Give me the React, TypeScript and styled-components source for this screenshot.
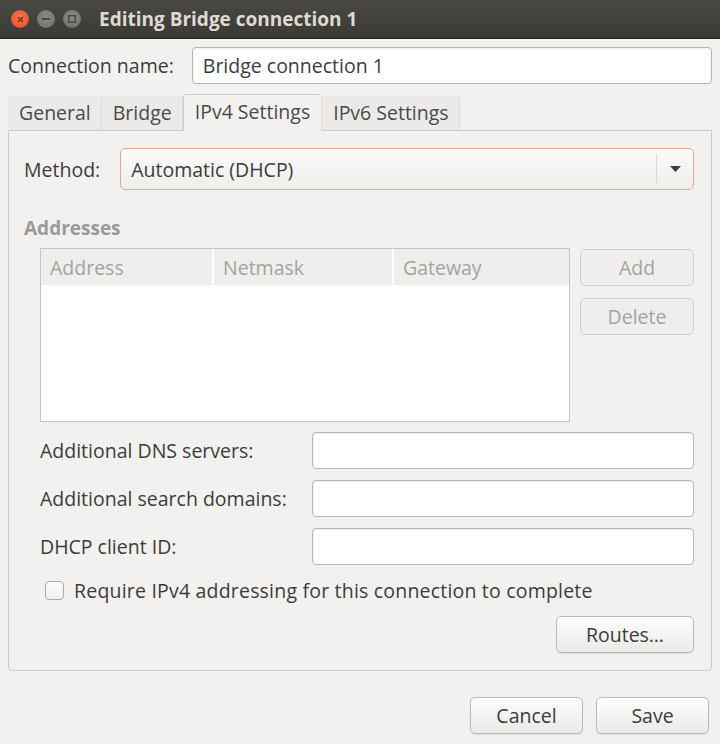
import { Fragment } from "react";
import styled, { createGlobalStyle } from "styled-components";

const GlobalStyle = createGlobalStyle`
    html, body {
        margin: 0;
        padding: 0;
        background: #f2f1f0;
    }
    body {
        font-family: "Open Sans", "Noto Sans", sans-serif;
        color: #3c3c3c;
    }
`;

const Window = styled.div`
    width: 720px;
    height: 744px;
    display: flex;
    flex-direction: column;
    background: #f2f1f0;
    overflow: hidden;
`;

const TitleBar = styled.div`
    height: 38px;
    display: flex;
    align-items: center;
    padding-left: 11px;
    gap: 8px;
    background: linear-gradient(#4a4944, #3a3935);
    border-bottom: 1px solid #2a2926;
`;

const WinButton = styled.div<{ $close?: boolean }>`
    width: 18px;
    height: 18px;
    border-radius: 50%;
    display: flex;
    align-items: center;
    justify-content: center;
    background: ${({ $close }) =>
        $close
            ? "radial-gradient(circle at 50% 40%, #f47a53, #df4a1f)"
            : "radial-gradient(circle at 50% 40%, #8c8b86, #6d6c67)"};
`;

const Title = styled.div`
    margin-left: 10px;
    color: #dfdbd2;
    font-weight: 700;
    font-size: 19px;
`;

const Body = styled.div`
    flex: 1;
    display: flex;
    flex-direction: column;
    padding: 7px 8px 0 8px;
`;

const NameRow = styled.div`
    display: flex;
    align-items: center;
    gap: 18px;
    height: 39px;
`;

const Label = styled.span`
    font-size: 19.5px;
    color: #3c3c3c;
    white-space: nowrap;
`;

const CheckLabel = styled(Label)`
    letter-spacing: 0.2px;
`;

const TextInput = styled.div`
    flex: 1;
    height: 37px;
    box-sizing: border-box;
    border: 1px solid #b9b6b1;
    border-radius: 4px;
    background: #fff;
    box-shadow: inset 0 1px 2px rgba(0, 0, 0, 0.08);
    display: flex;
    align-items: center;
    padding: 0 10px;
    font-size: 19.5px;
    color: #3c3c3c;
`;

const TabBar = styled.div`
    display: flex;
    align-items: flex-end;
    margin-top: 8px;
    height: 37px;
`;

const Tab = styled.div<{ $active?: boolean }>`
    height: ${({ $active }) => ($active ? "37px" : "34px")};
    box-sizing: border-box;
    display: flex;
    align-items: center;
    padding: 0 ${({ $active }) => ($active ? "11px" : "10px")};
    padding-bottom: 3px;
    font-size: 19.5px;
    color: #4a4a4a;
    background: ${({ $active }) => ($active ? "#f2f1f0" : "#ebeae8")};
    border: 1px solid ${({ $active }) => ($active ? "#cfccc7" : "transparent")};
    border-right: 1px solid #dedcd8;
    border-bottom: none;
    border-radius: ${({ $active }) => ($active ? "4px 4px 0 0" : "0")};
    position: relative;
    top: ${({ $active }) => ($active ? "1px" : "0")};
    z-index: ${({ $active }) => ($active ? 1 : 0)};
`;

const Panel = styled.div`
    width: 704px;
    height: 541px;
    box-sizing: border-box;
    border: 1px solid #cfccc7;
    border-radius: 0 0 4px 4px;
    padding: 17px 17px 0 15px;
    display: flex;
    flex-direction: column;
`;

const MethodRow = styled.div`
    display: flex;
    align-items: center;
    gap: 20px;
`;

const Combo = styled.div`
    flex: 1;
    height: 42px;
    box-sizing: border-box;
    border: 1px solid #e9a493;
    border-radius: 5px;
    background: linear-gradient(#fbfbfa, #efeeec);
    display: flex;
    align-items: center;
    font-size: 19.5px;
    color: #3c3c3c;
`;

const ComboText = styled.span`
    flex: 1;
    padding-left: 10px;
`;

const ComboArrow = styled.div`
    width: 36px;
    height: 30px;
    border-left: 1px solid #dad8d4;
    display: flex;
    align-items: center;
    justify-content: center;
`;

const SectionTitle = styled.div`
    margin-top: 25px;
    font-size: 19px;
    font-weight: 700;
    color: #9a9a98;
`;

const AddrRow = styled.div`
    display: flex;
    gap: 10px;
    margin-top: 7px;
    padding-left: 16px;
`;

const Table = styled.div`
    width: 530px;
    height: 174px;
    box-sizing: border-box;
    border: 1px solid #c8c5c0;
    background: #fff;
`;

const TableHead = styled.div`
    display: grid;
    grid-template-columns: 173px 180px 1fr;
    height: 36px;
    background: #efeeec;
`;

const HeadCell = styled.div`
    display: flex;
    align-items: center;
    padding-left: 9px;
    font-size: 19.5px;
    color: #a3a3a1;
    border-right: 2px solid #fff;
    &:last-child {
        border-right: none;
    }
`;

const SideButtons = styled.div`
    display: flex;
    flex-direction: column;
    gap: 12px;
    padding-top: 1px;
`;

const Button = styled.div<{ $w: number; $disabled?: boolean }>`
    width: ${({ $w }) => $w}px;
    height: 37px;
    box-sizing: border-box;
    border: 1px solid ${({ $disabled }) => ($disabled ? "#d3d1cd" : "#bdbab5")};
    border-radius: 5px;
    background: ${({ $disabled }) =>
        $disabled ? "#efeeec" : "linear-gradient(#fdfdfc, #ebeae8)"};
    box-shadow: ${({ $disabled }) =>
        $disabled ? "none" : "0 1px 1px rgba(0, 0, 0, 0.08)"};
    display: flex;
    align-items: center;
    justify-content: center;
    font-size: 19.5px;
    color: ${({ $disabled }) => ($disabled ? "#a3a3a1" : "#3c3c3c")};
`;

const FieldGrid = styled.div`
    display: grid;
    grid-template-columns: 272px 1fr;
    row-gap: 11px;
    align-items: center;
    margin-top: 10px;
    padding-left: 16px;
`;

const CheckRow = styled.div`
    display: flex;
    align-items: center;
    gap: 10px;
    margin-top: 12px;
    padding-left: 21px;
`;

const CheckBox = styled.div`
    width: 19px;
    height: 19px;
    box-sizing: border-box;
    border: 1px solid #aeaba6;
    border-radius: 4px;
    background: linear-gradient(#fdfdfc, #efeeec);
`;

const RoutesRow = styled.div`
    display: flex;
    justify-content: flex-end;
    margin-top: 12px;
`;

const Footer = styled.div`
    display: flex;
    justify-content: flex-end;
    gap: 13px;
    margin-top: 26px;
    padding-right: 3px;
`;

const columns = ["Address", "Netmask", "Gateway"];
const fields = ["Additional DNS servers:", "Additional search domains:", "DHCP client ID:"];

export default function App() {
    return (
        <>
            <GlobalStyle />
            <Window>
                <TitleBar>
                    <WinButton $close>
                        <svg width="7" height="7" viewBox="0 0 7 7">
                            <path d="M1 1 L6 6 M6 1 L1 6" stroke="#8a2c10" strokeWidth="1.6" />
                        </svg>
                    </WinButton>
                    <WinButton>
                        <svg width="8" height="2" viewBox="0 0 8 2">
                            <rect width="8" height="2" fill="#4a4945" />
                        </svg>
                    </WinButton>
                    <WinButton>
                        <svg width="8" height="8" viewBox="0 0 8 8">
                            <rect x="0.75" y="0.75" width="6.5" height="6.5" fill="none" stroke="#4a4945" strokeWidth="1.5" />
                        </svg>
                    </WinButton>
                    <Title>Editing Bridge connection 1</Title>
                </TitleBar>
                <Body>
                    <NameRow>
                        <Label>Connection name:</Label>
                        <TextInput>Bridge connection 1</TextInput>
                    </NameRow>
                    <TabBar>
                        <Tab>General</Tab>
                        <Tab>Bridge</Tab>
                        <Tab $active>IPv4 Settings</Tab>
                        <Tab>IPv6 Settings</Tab>
                    </TabBar>
                    <Panel>
                        <MethodRow>
                            <Label>Method:</Label>
                            <Combo>
                                <ComboText>Automatic (DHCP)</ComboText>
                                <ComboArrow>
                                    <svg width="11" height="6" viewBox="0 0 11 6">
                                        <path d="M0 0 L11 0 L5.5 6 Z" fill="#3c3c3c" />
                                    </svg>
                                </ComboArrow>
                            </Combo>
                        </MethodRow>
                        <SectionTitle>Addresses</SectionTitle>
                        <AddrRow>
                            <Table>
                                <TableHead>
                                    {columns.map((c) => (
                                        <HeadCell key={c}>{c}</HeadCell>
                                    ))}
                                </TableHead>
                            </Table>
                            <SideButtons>
                                <Button $w={114} $disabled>Add</Button>
                                <Button $w={114} $disabled>Delete</Button>
                            </SideButtons>
                        </AddrRow>
                        <FieldGrid>
                            {fields.map((f) => (
                                <Fragment key={f}>
                                    <Label>{f}</Label>
                                    <TextInput />
                                </Fragment>
                            ))}
                        </FieldGrid>
                        <CheckRow>
                            <CheckBox />
                            <CheckLabel>Require IPv4 addressing for this connection to complete</CheckLabel>
                        </CheckRow>
                        <RoutesRow>
                            <Button $w={138}>Routes…</Button>
                        </RoutesRow>
                    </Panel>
                    <Footer>
                        <Button $w={113}>Cancel</Button>
                        <Button $w={113}>Save</Button>
                    </Footer>
                </Body>
            </Window>
        </>
    );
}
